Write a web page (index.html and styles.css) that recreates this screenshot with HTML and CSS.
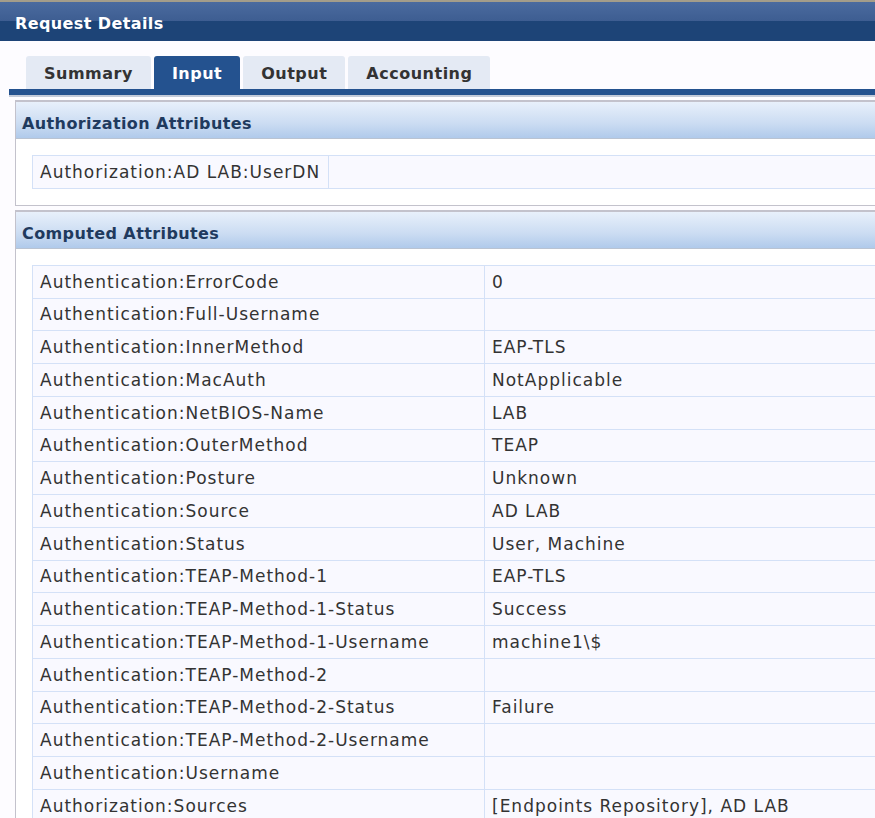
FILE: index.html
```html
<!DOCTYPE html>
<html lang="en">
<head>
  <meta charset="UTF-8" />
  <title>Request Details</title>
  <link rel="stylesheet" href="styles.css">
</head>
<body>
  <div class="page">
    <div class="title-bar">Request Details</div>

    <div class="tabs">
      <div class="tab">Summary</div>
      <div class="tab active">Input</div>
      <div class="tab">Output</div>
      <div class="tab">Accounting</div>
    </div>

    <div class="section">
      <div class="section-head">Authorization Attributes</div>
      <div class="section-body">
        <table class="attrs attrs-small">
          <tr><td class="name">Authorization:AD LAB:UserDN</td><td></td></tr>
        </table>
      </div>
    </div>

    <div class="section">
      <div class="section-head">Computed Attributes</div>
      <div class="section-body">
        <table class="attrs">
          <tr><td class="name">Authentication:ErrorCode</td><td>0</td></tr>
          <tr><td class="name">Authentication:Full-Username</td><td></td></tr>
          <tr><td class="name">Authentication:InnerMethod</td><td>EAP-TLS</td></tr>
          <tr><td class="name">Authentication:MacAuth</td><td>NotApplicable</td></tr>
          <tr><td class="name">Authentication:NetBIOS-Name</td><td>LAB</td></tr>
          <tr><td class="name">Authentication:OuterMethod</td><td>TEAP</td></tr>
          <tr><td class="name">Authentication:Posture</td><td>Unknown</td></tr>
          <tr><td class="name">Authentication:Source</td><td>AD LAB</td></tr>
          <tr><td class="name">Authentication:Status</td><td>User, Machine</td></tr>
          <tr><td class="name">Authentication:TEAP-Method-1</td><td>EAP-TLS</td></tr>
          <tr><td class="name">Authentication:TEAP-Method-1-Status</td><td>Success</td></tr>
          <tr><td class="name">Authentication:TEAP-Method-1-Username</td><td>machine1\$</td></tr>
          <tr><td class="name">Authentication:TEAP-Method-2</td><td></td></tr>
          <tr><td class="name">Authentication:TEAP-Method-2-Status</td><td>Failure</td></tr>
          <tr><td class="name">Authentication:TEAP-Method-2-Username</td><td></td></tr>
          <tr><td class="name">Authentication:Username</td><td></td></tr>
          <tr><td class="name">Authorization:Sources</td><td>[Endpoints Repository], AD LAB</td></tr>
        </table>
      </div>
    </div>
  </div>
</body>
</html>
```

FILE: styles.css
```css
html, body {
  overflow: hidden;
}
body {
  margin: 0;
  background: #fdfcff;
  font-family: "DejaVu Sans", Verdana, sans-serif;
  color: #333;
}
.page {
  width: 1000px;
}
.title-bar {
  border-top: 2px solid #a49d8a;
  height: 39px;
  line-height: 43px;
  padding-left: 15px;
  background: linear-gradient(#4b6b9f, #3d5d91 50%, #1d4477 50%, #1d4477);
  color: #fff;
  font-weight: bold;
  font-size: 16px;
  letter-spacing: 0.4px;
}
.tabs {
  display: flex;
  gap: 3px;
  margin: 15px 0 0 9px;
  padding-left: 17px;
  border-bottom: 6px solid #24528f;
  box-shadow: 0 2px 0 #c2cad9;
}
.tab {
  height: 33px;
  line-height: 35px;
  padding: 0 18px;
  background: #e4eaf4;
  border-radius: 3px 3px 0 0;
  font-weight: bold;
  font-size: 16px;
  letter-spacing: 0.5px;
  color: #333;
}
.tab.active {
  background: #24528f;
  color: #fff;
}
.section {
  margin: 4px 0 0 15px;
  border: 1px solid #c3c2cc;
  border-top-width: 2px;
  background: #fff;
}
.tabs + .section {
  margin-top: 5px;
}
.section-head {
  height: 36px;
  line-height: 43px;
  padding-left: 6px;
  background: linear-gradient(#e8f0fb, #cbdcf2 60%, #b0caeb);
  border-bottom: 1px solid #b9c3d2;
  font-weight: bold;
  font-size: 16px;
  letter-spacing: 0.4px;
  color: #1f3a5e;
}
.section-body {
  padding: 16px 0 16px 16px;
}
.attrs {
  border-collapse: collapse;
  width: 100%;
}
.attrs td {
  height: 31.75px;
  padding: 0 7px;
  border: 1px solid #d4e1f7;
  background: #f9f9ff;
  font-size: 17px;
  letter-spacing: 1px;
  white-space: nowrap;
}
.attrs td.name {
  width: 437px;
}
.attrs-small td.name {
  width: 281px;
}
```
